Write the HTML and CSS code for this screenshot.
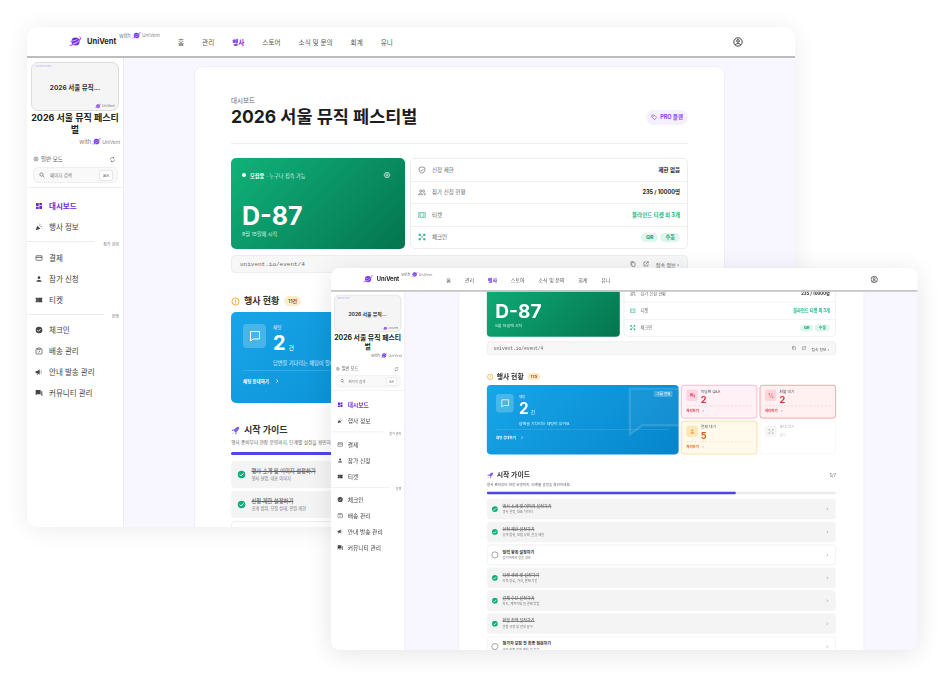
FILE: index.html
```html
<!DOCTYPE html>
<html lang="ko">
<head>
  <meta charset="UTF-8" />
  <meta name="viewport" content="width=device-width, initial-scale=1.0" />
  <title>UniVent 대시보드</title>
  <link rel="stylesheet" href="styles.css">
</head>
<body>
  <svg class="sprite" aria-hidden="true">
    <defs>
      <linearGradient id="planet" x1="0" y1="1" x2="1" y2="0">
        <stop offset="0" stop-color="#8b3dff"/>
        <stop offset="1" stop-color="#3f2bd6"/>
      </linearGradient>
    </defs>
    <symbol id="i-logo" viewBox="0 0 24 24">
      <circle cx="12" cy="12" r="7.5" fill="url(#planet)"/>
      <path d="M2 19C6 20 21 10 22 5" fill="none" stroke="#c04bf2" stroke-width="2" stroke-linecap="round"/>
      <path d="M6 11c3 0 8-2 10-4M8 16c3 0 7-2 10-5" fill="none" stroke="#fff" stroke-width="1.2"/>
      <circle cx="20" cy="3.5" r="1.4" fill="#e879f9"/>
      <circle cx="3" cy="12" r="1" fill="#a78bfa"/>
    </symbol>
    <symbol id="i-user" viewBox="0 0 24 24">
      <circle cx="12" cy="12" r="10" fill="none" stroke="currentColor" stroke-width="2"/>
      <circle cx="12" cy="9.5" r="3.2" fill="none" stroke="currentColor" stroke-width="2"/>
      <path d="M5.5 18.5c2-3.5 11-3.5 13 0" fill="none" stroke="currentColor" stroke-width="2"/>
    </symbol>
    <symbol id="i-gear" viewBox="0 0 24 24">
      <circle cx="12" cy="12" r="3.2" fill="none" stroke="currentColor" stroke-width="2"/>
      <path d="M12 3l2 2.6 3.3-.4.4 3.3L20.500 10.500 19 12l1.500 1.500-2.800 2 -.4 3.300-3.300-.4L12 21l-2-2.600-3.300.4-.4-3.300L3.500 13.500 5 12 3.500 10.500l2.800-2 .4-3.300 3.300.4z" fill="none" stroke="currentColor" stroke-width="2" stroke-linejoin="round"/>
    </symbol>
    <symbol id="i-refresh" viewBox="0 0 24 24">
      <path d="M5 12a7 7 0 0 1 11.500-5.400M19 12a7 7 0 0 1-11.500 5.400" fill="none" stroke="currentColor" stroke-width="2"/>
      <path d="M17.500 2.500v5h-5M6.500 21.500v-5h5" fill="currentColor"/>
    </symbol>
    <symbol id="i-search" viewBox="0 0 24 24">
      <circle cx="10" cy="10" r="6.500" fill="none" stroke="currentColor" stroke-width="2.400"/>
      <path d="M15 15l6 6" stroke="currentColor" stroke-width="2.400"/>
    </symbol>
    <symbol id="i-dash" viewBox="0 0 24 24">
      <path d="M3 3h8v10H3zM13 3h8v6h-8zM13 11h8v10h-8zM3 15h8v6H3z" fill="currentColor"/>
    </symbol>
    <symbol id="i-party" viewBox="0 0 24 24">
      <path d="M2 22l5-14 9 9z" fill="currentColor"/>
      <path d="M13 8l3-4M16 11l5-2M12 4V2M20 15l2 1" stroke="currentColor" stroke-width="1.600" fill="none"/>
    </symbol>
    <symbol id="i-card" viewBox="0 0 24 24">
      <rect x="3" y="5" width="18" height="14" rx="2" fill="none" stroke="currentColor" stroke-width="2"/>
      <path d="M3 10h18" stroke="currentColor" stroke-width="2.500"/>
    </symbol>
    <symbol id="i-person" viewBox="0 0 24 24">
      <circle cx="12" cy="8" r="4" fill="currentColor"/>
      <path d="M4 20c0-7 16-7 16 0z" fill="currentColor"/>
    </symbol>
    <symbol id="i-ticket" viewBox="0 0 24 24">
      <path d="M2 5h20v5a2 2 0 0 0 0 4v5H2v-5a2 2 0 0 0 0-4z" fill="currentColor"/>
      <path d="M9 5v14" stroke="#fff" stroke-width="1.400" stroke-dasharray="2 1.500"/>
    </symbol>
    <symbol id="i-check-fill" viewBox="0 0 24 24">
      <circle cx="12" cy="12" r="10" fill="currentColor"/>
      <path d="M7 12.500l3.500 3.500L17 9" fill="none" stroke="#fff" stroke-width="2.600"/>
    </symbol>
    <symbol id="i-box" viewBox="0 0 24 24">
      <path d="M9 5H5a2 2 0 0 0-2 2v12a2 2 0 0 0 2 2h14a2 2 0 0 0 2-2V7a2 2 0 0 0-2-2h-2" fill="none" stroke="currentColor" stroke-width="2"/>
      <path d="M8 3h8v5H8zM9 14l2 2 4-4" fill="none" stroke="currentColor" stroke-width="2"/>
    </symbol>
    <symbol id="i-mega" viewBox="0 0 24 24">
      <path d="M2 9h5l7-5v16l-7-5H2zM5 15l1 6h2l-1-6z" fill="currentColor"/>
      <path d="M17 8l3-2M17 12h4M17 16l3 2" stroke="currentColor" stroke-width="1.600"/>
    </symbol>
    <symbol id="i-forum" viewBox="0 0 24 24">
      <path d="M2 3h15v12H7l-5 4z" fill="currentColor"/>
      <path d="M19 7h3v15l-4-4H7v-1h12z" fill="currentColor"/>
    </symbol>
    <symbol id="i-tag" viewBox="0 0 24 24">
      <path d="M3 4h9l9 9-8 8-10-10z" fill="none" stroke="currentColor" stroke-width="2.400" stroke-linejoin="round"/>
      <circle cx="8" cy="9" r="1.600" fill="currentColor"/>
    </symbol>
    <symbol id="i-shield" viewBox="0 0 24 24">
      <path d="M12 2.500l8.500 3v6c0 5-3.500 8.500-8.500 10-5-1.500-8.500-5-8.500-10v-6z" fill="none" stroke="currentColor" stroke-width="2"/>
      <path d="M8 12l3 3 5-5.500" fill="none" stroke="currentColor" stroke-width="2"/>
    </symbol>
    <symbol id="i-people" viewBox="0 0 24 24">
      <circle cx="8" cy="9" r="3.200" fill="none" stroke="currentColor" stroke-width="1.800"/>
      <circle cx="16.500" cy="9" r="3.200" fill="none" stroke="currentColor" stroke-width="1.800"/>
      <path d="M1.500 20c0-6 12-6 12 0zM16 14.500c4 0 6.500 2 6.500 5.500H17" fill="none" stroke="currentColor" stroke-width="1.800"/>
    </symbol>
    <symbol id="i-ticket-line" viewBox="0 0 24 24">
      <path d="M2 5h20v5a2 2 0 0 0 0 4v5H2v-5a2 2 0 0 0 0-4z" fill="none" stroke="currentColor" stroke-width="2"/>
      <path d="M8 6v12M16 6v12" stroke="currentColor" stroke-width="1.600"/>
    </symbol>
    <symbol id="i-scan" viewBox="0 0 24 24">
      <path d="M5 5l14 14M19 5L5 19" stroke="currentColor" stroke-width="1.500"/>
      <path d="M2 2h6v6H2zM16 2h6v6h-6zM2 16h6v6H2zM16 16h6v6h-6z" fill="currentColor"/>
    </symbol>
    <symbol id="i-copy" viewBox="0 0 24 24">
      <rect x="7" y="6" width="13" height="16" rx="2" fill="none" stroke="currentColor" stroke-width="2.400"/>
      <path d="M4 17V3a1 1 0 0 1 1-1h10" fill="none" stroke="currentColor" stroke-width="2.400"/>
    </symbol>
    <symbol id="i-open" viewBox="0 0 24 24">
      <path d="M11 4H4v16h16v-7" fill="none" stroke="currentColor" stroke-width="2.400"/>
      <path d="M10 14L21 3M14 3h7v7" fill="none" stroke="currentColor" stroke-width="2.400"/>
    </symbol>
    <symbol id="i-info" viewBox="0 0 24 24">
      <circle cx="12" cy="12" r="9.500" fill="none" stroke="currentColor" stroke-width="2.400"/>
      <path d="M12 7v6.500M12 15.500v2" stroke="currentColor" stroke-width="2.400"/>
    </symbol>
    <symbol id="i-chat" viewBox="0 0 24 24">
      <path d="M3 3h18v15H8l-5 4z" fill="none" stroke="currentColor" stroke-width="2"/>
    </symbol>
    <symbol id="i-bubble" viewBox="0 0 80 64">
      <path d="M2 2h90v48H18L2 62z" fill="rgba(255,255,255,0.05)" stroke="rgba(255,255,255,0.14)" stroke-width="3"/>
    </symbol>
    <symbol id="i-rocket" viewBox="0 0 24 24">
      <path d="M22 2c-7 0-12 4-15 10l5 5c6-3 10-8 10-15z" fill="currentColor"/>
      <path d="M7 9l-5 2 3 2zM15 17l-2 5-2-3zM3 21l4-4" fill="currentColor" stroke="currentColor"/>
    </symbol>
    <symbol id="i-chevron" viewBox="0 0 24 24">
      <path d="M9 5l7 7-7 7" fill="none" stroke="currentColor" stroke-width="3"/>
    </symbol>
    <symbol id="i-qa" viewBox="0 0 24 24">
      <path d="M2 3h14v11H6l-4 4zM18 8h4v13l-4-3H9v-2h9z" fill="currentColor"/>
    </symbol>
    <symbol id="i-refund" viewBox="0 0 24 24">
      <path d="M5 3v9M2 6l3-3 3 3M19 21v-9M16 18l3 3 3-3" fill="none" stroke="currentColor" stroke-width="2"/>
      <path d="M7 21L17 3" stroke="currentColor" stroke-width="2"/>
    </symbol>
  </svg>

  <section class="window window-back">
    <header class="nav">
      <div class="brand">
        <svg class="brand-logo"><use href="#i-logo"/></svg>
        <span class="brand-name">UniVent</span>
        <span class="with with-nav">with <svg><use href="#i-logo"/></svg> <small>UniVent</small></span>
      </div>
      <nav class="nav-links">
        <a>홈</a><a>관리</a><a class="active">행사</a><a>스토어</a><a>소식 및 문의</a><a>회계</a><a>유니</a>
      </nav>
      <svg class="nav-user"><use href="#i-user"/></svg>
    </header>
    <div class="layout">
      <aside class="sidebar">
        <div class="thumb">
          <span class="thumb-tag">UniVent Event</span>
          <span class="thumb-title">2026 서울 뮤직...</span>
          <span class="thumb-mark"><svg><use href="#i-logo"/></svg> UniVent</span>
        </div>
        <h3 class="event-name">2026 서울 뮤직 페스티벌</h3>
        <div class="with with-side">with <svg><use href="#i-logo"/></svg> <small>UniVent</small></div>
        <div class="mode">
          <span class="mode-label"><svg><use href="#i-gear"/></svg> 일반 모드</span>
          <svg class="mode-refresh"><use href="#i-refresh"/></svg>
        </div>
        <div class="search">
          <svg><use href="#i-search"/></svg>
          <span>페이지 검색</span>
          <kbd>⌘K</kbd>
        </div>
        <ul class="menu menu-top">
          <li class="active"><svg><use href="#i-dash"/></svg>대시보드</li>
          <li><svg><use href="#i-party"/></svg>행사 정보</li>
        </ul>
        <div class="menu-group group-wide"><i></i><span>참가 관리</span></div>
        <ul class="menu">
          <li><svg><use href="#i-card"/></svg>결제</li>
          <li><svg><use href="#i-person"/></svg>참가 신청</li>
          <li><svg><use href="#i-ticket"/></svg>티켓</li>
        </ul>
        <div class="menu-group"><i></i><span>운영</span></div>
        <ul class="menu">
          <li><svg><use href="#i-check-fill"/></svg>체크인</li>
          <li><svg><use href="#i-box"/></svg>배송 관리</li>
          <li><svg><use href="#i-mega"/></svg>안내 발송 관리</li>
          <li><svg><use href="#i-forum"/></svg>커뮤니티 관리</li>
        </ul>
      </aside>
      <main class="main">
        <div class="card">
          <p class="crumb">대시보드</p>
          <div class="title-row">
            <h1>2026 서울 뮤직 페스티벌</h1>
            <span class="plan"><svg><use href="#i-tag"/></svg>PRO 플랜</span>
          </div>
          <div class="overview">
            <div class="hero">
              <div class="hero-top">
                <span class="hero-status"><i></i><b>모집중</b> · 누구나 접속 가능</span>
                <svg><use href="#i-gear"/></svg>
              </div>
              <div class="hero-dday">D-87</div>
              <div class="hero-date">8월 15일에 시작</div>
            </div>
            <div class="info">
              <div class="info-row"><svg><use href="#i-shield"/></svg><span>신청 제한</span><b>제한 없음</b></div>
              <div class="info-row"><svg><use href="#i-people"/></svg><span>참가 신청 현황</span><b>235 / 10000명</b></div>
              <div class="info-row row-green"><svg><use href="#i-ticket-line"/></svg><span>티켓</span><b>블라인드 티켓 외 3개</b></div>
              <div class="info-row row-green"><svg><use href="#i-scan"/></svg><span>체크인</span><em>QR</em><em>수동</em></div>
            </div>
          </div>
          <div class="url-bar">
            <code>univent.io/event/4</code>
            <svg><use href="#i-copy"/></svg>
            <svg><use href="#i-open"/></svg>
            <span>접속 정보 ›</span>
          </div>
          <h2 class="section-title status-title"><svg><use href="#i-info"/></svg>행사 현황<span class="count">11건</span></h2>
          <div class="status-grid">
            <div class="chat-card">
              <svg class="chat-deco"><use href="#i-bubble"/></svg>
              <span class="chat-scope">그룹 전체</span>
              <div class="chat-main">
                <div class="chat-tile"><svg><use href="#i-chat"/></svg></div>
                <div>
                  <div class="chat-label">채팅</div>
                  <div class="chat-num">2<small>건</small></div>
                  <div class="chat-desc">답변을 기다리는 채팅이 있어요</div>
                </div>
              </div>
              <div class="chat-link">채팅 응대하기 <svg><use href="#i-chevron"/></svg></div>
            </div>
            <div class="todo todo-pink">
              <div class="todo-top"><span class="todo-icon"><svg><use href="#i-qa"/></svg></span><div><p>미답변 Q&amp;A</p><b>2</b></div></div>
              <div class="todo-link">처리하기 <svg><use href="#i-chevron"/></svg></div>
            </div>
            <div class="todo todo-red">
              <div class="todo-top"><span class="todo-icon"><svg><use href="#i-refund"/></svg></span><div><p>환불 대기</p><b>2</b></div></div>
              <div class="todo-link">처리하기 <svg><use href="#i-chevron"/></svg></div>
            </div>
            <div class="todo todo-yellow">
              <div class="todo-top"><span class="todo-icon"><svg><use href="#i-person"/></svg></span><div><p>결제 대기</p><b>5</b></div></div>
              <div class="todo-link">처리하기 <svg><use href="#i-chevron"/></svg></div>
            </div>
            <div class="todo todo-empty">
              <div class="todo-top"><span class="todo-icon"><svg><use href="#i-scan"/></svg></span><div><p>초대 대기</p><small>없음</small></div></div>
            </div>
          </div>
          <div class="guide-head">
            <div>
              <h2 class="section-title"><svg class="rocket"><use href="#i-rocket"/></svg>시작 가이드</h2>
              <p>행사 준비부터 현장 운영까지, 단계별 설정을 확인하세요.</p>
            </div>
            <span>5/7</span>
          </div>
          <div class="progress"><i></i></div>
          <ul class="guide">
            <li class="done"><svg class="state"><use href="#i-check-fill"/></svg><div><b>행사 소개 및 이미지 설정하기</b><span>행사 설명, 대표 이미지</span></div><svg class="arrow"><use href="#i-chevron"/></svg></li>
            <li class="done"><svg class="state"><use href="#i-check-fill"/></svg><div><b>신청 제한 설정하기</b><span>공개 범위, 모집 상태, 인원 제한</span></div><svg class="arrow"><use href="#i-chevron"/></svg></li>
            <li><i class="state"></i><div><b>입력 항목 설정하기</b><span>참가자에게 받을 정보</span></div><svg class="arrow"><use href="#i-chevron"/></svg></li>
          </ul>
        </div>
      </main>
    </div>
  </section>

  <section class="window window-front">
    <header class="nav">
      <div class="brand">
        <svg class="brand-logo"><use href="#i-logo"/></svg>
        <span class="brand-name">UniVent</span>
        <span class="with with-nav">with <svg><use href="#i-logo"/></svg> <small>UniVent</small></span>
      </div>
      <nav class="nav-links">
        <a>홈</a><a>관리</a><a class="active">행사</a><a>스토어</a><a>소식 및 문의</a><a>회계</a><a>유니</a>
      </nav>
      <svg class="nav-user"><use href="#i-user"/></svg>
    </header>
    <div class="layout">
      <aside class="sidebar">
        <div class="thumb">
          <span class="thumb-tag">UniVent Event</span>
          <span class="thumb-title">2026 서울 뮤직...</span>
          <span class="thumb-mark"><svg><use href="#i-logo"/></svg> UniVent</span>
        </div>
        <h3 class="event-name">2026 서울 뮤직 페스티벌</h3>
        <div class="with with-side">with <svg><use href="#i-logo"/></svg> <small>UniVent</small></div>
        <div class="mode">
          <span class="mode-label"><svg><use href="#i-gear"/></svg> 일반 모드</span>
          <svg class="mode-refresh"><use href="#i-refresh"/></svg>
        </div>
        <div class="search">
          <svg><use href="#i-search"/></svg>
          <span>페이지 검색</span>
          <kbd>⌘K</kbd>
        </div>
        <ul class="menu menu-top">
          <li class="active"><svg><use href="#i-dash"/></svg>대시보드</li>
          <li><svg><use href="#i-party"/></svg>행사 정보</li>
        </ul>
        <div class="menu-group group-wide"><i></i><span>참가 관리</span></div>
        <ul class="menu">
          <li><svg><use href="#i-card"/></svg>결제</li>
          <li><svg><use href="#i-person"/></svg>참가 신청</li>
          <li><svg><use href="#i-ticket"/></svg>티켓</li>
        </ul>
        <div class="menu-group"><i></i><span>운영</span></div>
        <ul class="menu">
          <li><svg><use href="#i-check-fill"/></svg>체크인</li>
          <li><svg><use href="#i-box"/></svg>배송 관리</li>
          <li><svg><use href="#i-mega"/></svg>안내 발송 관리</li>
          <li><svg><use href="#i-forum"/></svg>커뮤니티 관리</li>
        </ul>
      </aside>
      <main class="main">
        <div class="card">
          <p class="crumb">대시보드</p>
          <div class="title-row">
            <h1>2026 서울 뮤직 페스티벌</h1>
            <span class="plan"><svg><use href="#i-tag"/></svg>PRO 플랜</span>
          </div>
          <div class="overview">
            <div class="hero">
              <div class="hero-top">
                <span class="hero-status"><i></i><b>모집중</b> · 누구나 접속 가능</span>
                <svg><use href="#i-gear"/></svg>
              </div>
              <div class="hero-dday">D-87</div>
              <div class="hero-date">8월 15일에 시작</div>
            </div>
            <div class="info">
              <div class="info-row"><svg><use href="#i-shield"/></svg><span>신청 제한</span><b>제한 없음</b></div>
              <div class="info-row"><svg><use href="#i-people"/></svg><span>참가 신청 현황</span><b>235 / 10000명</b></div>
              <div class="info-row row-green"><svg><use href="#i-ticket-line"/></svg><span>티켓</span><b>블라인드 티켓 외 3개</b></div>
              <div class="info-row row-green"><svg><use href="#i-scan"/></svg><span>체크인</span><em>QR</em><em>수동</em></div>
            </div>
          </div>
          <div class="url-bar">
            <code>univent.io/event/4</code>
            <svg><use href="#i-copy"/></svg>
            <svg><use href="#i-open"/></svg>
            <span>접속 정보 ›</span>
          </div>
          <h2 class="section-title status-title"><svg><use href="#i-info"/></svg>행사 현황<span class="count">11건</span></h2>
          <div class="status-grid">
            <div class="chat-card">
              <svg class="chat-deco"><use href="#i-bubble"/></svg>
              <span class="chat-scope">그룹 전체</span>
              <div class="chat-main">
                <div class="chat-tile"><svg><use href="#i-chat"/></svg></div>
                <div>
                  <div class="chat-label">채팅</div>
                  <div class="chat-num">2<small>건</small></div>
                  <div class="chat-desc">답변을 기다리는 채팅이 있어요</div>
                </div>
              </div>
              <div class="chat-link">채팅 응대하기 <svg><use href="#i-chevron"/></svg></div>
            </div>
            <div class="todo todo-pink">
              <div class="todo-top"><span class="todo-icon"><svg><use href="#i-qa"/></svg></span><div><p>미답변 Q&amp;A</p><b>2</b></div></div>
              <div class="todo-link">처리하기 <svg><use href="#i-chevron"/></svg></div>
            </div>
            <div class="todo todo-red">
              <div class="todo-top"><span class="todo-icon"><svg><use href="#i-refund"/></svg></span><div><p>환불 대기</p><b>2</b></div></div>
              <div class="todo-link">처리하기 <svg><use href="#i-chevron"/></svg></div>
            </div>
            <div class="todo todo-yellow">
              <div class="todo-top"><span class="todo-icon"><svg><use href="#i-person"/></svg></span><div><p>결제 대기</p><b>5</b></div></div>
              <div class="todo-link">처리하기 <svg><use href="#i-chevron"/></svg></div>
            </div>
            <div class="todo todo-empty">
              <div class="todo-top"><span class="todo-icon"><svg><use href="#i-scan"/></svg></span><div><p>초대 대기</p><small>없음</small></div></div>
            </div>
          </div>
          <div class="guide-head">
            <div>
              <h2 class="section-title"><svg class="rocket"><use href="#i-rocket"/></svg>시작 가이드</h2>
              <p>행사 준비부터 현장 운영까지, 단계별 설정을 확인하세요.</p>
            </div>
            <span>5/7</span>
          </div>
          <div class="progress"><i></i></div>
          <ul class="guide">
            <li class="done"><svg class="state"><use href="#i-check-fill"/></svg><div><b>행사 소개 및 이미지 설정하기</b><span>행사 설명, 대표 이미지</span></div><svg class="arrow"><use href="#i-chevron"/></svg></li>
            <li class="done"><svg class="state"><use href="#i-check-fill"/></svg><div><b>신청 제한 설정하기</b><span>공개 범위, 모집 상태, 인원 제한</span></div><svg class="arrow"><use href="#i-chevron"/></svg></li>
            <li><i class="state"></i><div><b>입력 항목 설정하기</b><span>참가자에게 받을 정보</span></div><svg class="arrow"><use href="#i-chevron"/></svg></li>
            <li class="done"><svg class="state"><use href="#i-check-fill"/></svg><div><b>티켓 생성 및 설정하기</b><span>티켓 종류, 가격, 판매 기간</span></div><svg class="arrow"><use href="#i-chevron"/></svg></li>
            <li class="done"><svg class="state"><use href="#i-check-fill"/></svg><div><b>결제 수단 설정하기</b><span>카드, 계좌이체 등 결제 방법</span></div><svg class="arrow"><use href="#i-chevron"/></svg></li>
            <li class="done"><svg class="state"><use href="#i-check-fill"/></svg><div><b>환불 정책 설정하기</b><span>환불 규정 및 안내 문구</span></div><svg class="arrow"><use href="#i-chevron"/></svg></li>
            <li><i class="state"></i><div><b>참가자 모집 전 최종 점검하기</b><span>설정 항목 전체 확인 및 점검</span></div><svg class="arrow"><use href="#i-chevron"/></svg></li>
          </ul>
        </div>
      </main>
    </div>
  </section>
</body>
</html>
```

FILE: styles.css
```css
* {
  box-sizing: border-box;
  margin: 0;
  padding: 0;
}
html, body {
  height: 100%;
}
body {
  position: relative;
  overflow: hidden;
  background: #fff;
  font-family: Inter, "Noto Sans CJK KR", sans-serif;
  color: #222;
}
ul {
  list-style: none;
}
.sprite {
  position: absolute;
  width: 0;
  height: 0;
}

/* two copies of the same page, the front one shrunk and scrolled */
.window {
  position: absolute;
  width: 768px;
  height: 500px;
  display: flex;
  flex-direction: column;
  border-radius: 11px;
  overflow: hidden;
  background: #f8f6fe;
  transform-origin: top left;
}
.window-back {
  left: 27px;
  top: 27px;
  box-shadow: 0 2px 24px rgba(0, 0, 0, 0.08);
}
.window-front {
  left: 331px;
  top: 268px;
  transform: scale(0.764);
  box-shadow: 0 4px 30px rgba(0, 0, 0, 0.1);
}
.window-front .card {
  margin-top: -132px;
}

.nav {
  flex: none;
  height: 31px;
  display: flex;
  align-items: center;
  padding: 0 0 0 42px;
  background: #fff;
  border-bottom: 2px solid #bdbdbd;
  position: relative;
  z-index: 2;
}
.brand {
  width: 109px;
  display: flex;
  align-items: center;
  flex: none;
  white-space: nowrap;
}
.brand-logo {
  flex: none;
  width: 13px;
  height: 13px;
}
.brand-name {
  flex: none;
  margin-left: 5px;
  width: 32px;
  font-size: 7.500px;
  font-weight: 700;
  color: #222;
}
.with {
  display: flex;
  align-items: center;
  gap: 1px;
  color: #888;
  font-size: 6px;
  white-space: nowrap;
}
.with small {
  font-size: 4.800px;
}
.with svg {
  width: 9px;
  height: 9px;
}
.with-nav {
  margin-bottom: 13px;
}
.nav-links {
  display: flex;
  gap: 18px;
  font-size: 6.600px;
  color: #555;
  white-space: nowrap;
}
.nav-links .active {
  color: #6d28d9;
  font-weight: 700;
}
.nav-user {
  width: 10px;
  height: 10px;
  color: #222;
  margin-left: auto;
  margin-right: 52px;
}

.layout {
  flex: 1;
  display: flex;
  min-height: 0;
}
.sidebar {
  flex: none;
  width: 97px;
  background: #fff;
  border-right: 1px solid #ececf2;
}
.thumb {
  margin: 4px 4px 0;
  width: 88px;
  height: 49px;
  border: 1px solid #ddd;
  border-radius: 7px;
  background: #f5f5f5;
  display: flex;
  align-items: center;
  justify-content: center;
  position: relative;
}
.thumb-tag {
  position: absolute;
  left: 3px;
  top: 2px;
  font-size: 2.500px;
  color: #b9a8f5;
}
.thumb-title {
  font-size: 6.500px;
  font-weight: 700;
  color: #333;
}
.thumb-mark {
  position: absolute;
  right: 3px;
  bottom: 1px;
  display: flex;
  align-items: center;
  gap: 1px;
  font-size: 3.500px;
  color: #777;
}
.thumb-mark svg {
  width: 6px;
  height: 6px;
}
.event-name {
  margin: 1px 3px 0;
  font-size: 9px;
  line-height: 11.500px;
  font-weight: 700;
  text-align: center;
  color: #222;
}
.with-side {
  justify-content: flex-end;
  padding-right: 3px;
  margin-top: 2px;
}
.mode {
  display: flex;
  align-items: center;
  justify-content: space-between;
  margin-top: 9px;
  padding: 0 7px 0 6px;
}
.mode-label {
  display: flex;
  align-items: center;
  gap: 2px;
  font-size: 5.500px;
  color: #555;
}
.mode-label svg {
  width: 6px;
  height: 6px;
}
.mode-refresh {
  width: 7px;
  height: 7px;
  color: #555;
}
.search {
  margin: 4px 5px 0 6px;
  height: 16px;
  display: flex;
  align-items: center;
  gap: 5px;
  padding: 0 4px 0 5px;
  background: #f9f9f9;
  border: 1px solid #efefef;
  border-radius: 5px;
  font-size: 4.500px;
  color: #777;
}
.search svg {
  width: 6px;
  height: 6px;
  color: #555;
}
.search kbd {
  margin-left: auto;
  padding: 2px 2.500px;
  background: #fff;
  border: 1px solid #e6e6e6;
  border-radius: 2px;
  font-family: inherit;
  font-size: 4px;
  line-height: 5px;
  color: #777;
}
.menu-top {
  border-top: 1px solid #efefef;
  margin-top: 4px;
  padding-top: 7px;
}
.menu li {
  height: 21px;
  display: flex;
  align-items: center;
  gap: 6px;
  padding-left: 8px;
  font-size: 7.500px;
  color: #444;
}
.menu li svg {
  width: 8px;
  height: 8px;
  color: #444;
}
.menu li.active {
  color: #6d28d9;
  font-weight: 700;
}
.menu li.active svg {
  color: #6d28d9;
}
.menu-group {
  height: 10px;
  margin-top: -1px;
  display: flex;
  align-items: center;
  gap: 8px;
  padding-right: 4px;
}
.group-wide {
  height: 11px;
}
.menu-group i {
  flex: 1;
  height: 1px;
  background: #ececec;
}
.menu-group span {
  margin-top: 4px;
  font-size: 4px;
  color: #777;
}

.main {
  flex: 1;
  min-width: 0;
  padding: 8px 70px 0;
}
.card {
  background: #fff;
  border: 1px solid #f0eef6;
  border-radius: 9px;
  padding: 30px 36px 0;
  height: 1000px;
}
.crumb {
  font-size: 6.500px;
  line-height: 9px;
  color: #666;
}
.title-row {
  margin-top: 1px;
  padding-bottom: 16px;
  display: flex;
  align-items: center;
  justify-content: space-between;
  border-bottom: 1px solid #efefef;
}
.title-row h1 {
  font-size: 17.500px;
  line-height: 20px;
  font-weight: 700;
  color: #1c1c1c;
}
.plan {
  display: flex;
  align-items: center;
  gap: 3px;
  height: 15px;
  padding: 0 5px;
  background: #f4f0fe;
  border-radius: 8px;
  font-size: 5.500px;
  font-weight: 700;
  color: #8b3dff;
}
.plan svg {
  width: 6.500px;
  height: 6.500px;
}
.overview {
  margin-top: 14px;
  display: flex;
  gap: 5px;
}
.hero {
  flex: none;
  width: 174px;
  height: 91px;
  padding: 12px 11px 0;
  border-radius: 5px;
  color: #fff;
  background: linear-gradient(135deg, #10b27a, #04744f);
}
.hero-top {
  display: flex;
  align-items: center;
  justify-content: space-between;
  height: 10px;
  padding-right: 3px;
}
.hero-top svg {
  width: 8px;
  height: 8px;
}
.hero-status {
  display: flex;
  align-items: center;
  gap: 2px;
  font-size: 5.200px;
  color: #d6f3e7;
}
.hero-status i {
  width: 4px;
  height: 4px;
  margin-right: 2px;
  border-radius: 50%;
  background: #fff;
}
.hero-status b {
  color: #fff;
}
.hero-dday {
  margin-top: 22px;
  font-size: 25px;
  line-height: 28px;
  font-weight: 700;
}
.hero-date {
  font-size: 5.200px;
  line-height: 8px;
  color: #d6f3e7;
}
.info {
  flex: 1;
  height: 91px;
  display: flex;
  flex-direction: column;
  border: 1px solid #ececec;
  border-radius: 5px;
}
.info-row {
  flex: 1;
  display: flex;
  align-items: center;
  padding: 0 7px;
  border-top: 1px solid #f0f0f0;
  font-size: 5.500px;
  color: #666;
}
.info-row:first-child {
  border-top: 0;
}
.info-row svg {
  width: 8px;
  height: 8px;
  margin-right: 6px;
  color: #666;
}
.info-row b {
  margin-left: auto;
  font-weight: 700;
  color: #222;
}
.row-green svg, .row-green b {
  color: #1fb383;
}
.info-row em {
  height: 9px;
  padding: 1px 5px;
  margin-left: 2px;
  border-radius: 5px;
  background: #dff6ee;
  color: #15a275;
  font-style: normal;
  font-weight: 700;
  font-size: 5.200px;
  line-height: 7px;
}
.info-row em:first-of-type {
  margin-left: auto;
}
.url-bar {
  margin-top: 6px;
  height: 18px;
  display: flex;
  align-items: center;
  gap: 7px;
  padding: 0 8px;
  background: #f7f7f7;
  border: 1px solid #ededed;
  border-radius: 4px;
  font-size: 5px;
  color: #555;
}
.url-bar code {
  margin-right: auto;
  font-family: "Liberation Mono", monospace;
  font-size: 6px;
  color: #666;
}
.url-bar svg {
  width: 6px;
  height: 6px;
  color: #666;
}

.section-title {
  display: flex;
  align-items: center;
  gap: 4px;
  font-size: 9px;
  line-height: 14px;
  font-weight: 700;
  color: #333;
}
.section-title svg {
  width: 9px;
  height: 9px;
}
.status-title {
  margin-top: 21px;
}
.status-title svg {
  color: #f0a030;
}
.count {
  margin-left: 1px;
  padding: 0 4px;
  height: 10px;
  background: #fdeccb;
  border-radius: 5px;
  font-size: 5px;
  line-height: 10px;
  color: #c2410c;
}
.status-grid {
  margin-top: 4px;
  display: grid;
  grid-template-columns: 251px 100px 100px;
  grid-template-rows: 44px 44px;
  gap: 3px;
}
.chat-card {
  grid-row: span 2;
  position: relative;
  overflow: hidden;
  padding: 12px 12px 0;
  border-radius: 5px;
  color: #fff;
  background: linear-gradient(135deg, #18a6e8, #0585cb);
}
.chat-deco {
  position: absolute;
  right: -14px;
  top: 3px;
  width: 80px;
  height: 64px;
}
.chat-scope {
  position: absolute;
  right: 8px;
  top: 8px;
  padding: 1px 3px;
  background: rgba(255, 255, 255, 0.22);
  border-radius: 1px;
  font-size: 4.500px;
  line-height: 6px;
}
.chat-main {
  display: flex;
  gap: 7px;
  position: relative;
}
.chat-tile {
  width: 23px;
  height: 24px;
  display: flex;
  align-items: center;
  justify-content: center;
  border-radius: 4px;
  background: rgba(255, 255, 255, 0.22);
}
.chat-tile svg {
  width: 12px;
  height: 12px;
}
.chat-label {
  margin-top: 1px;
  font-size: 4.500px;
  line-height: 6px;
  color: #e2f4fd;
}
.chat-num {
  margin-top: 2px;
  font-size: 20px;
  line-height: 21px;
  font-weight: 700;
}
.chat-num small {
  margin-left: 3px;
  font-size: 6px;
  font-weight: 400;
}
.chat-desc {
  margin-top: 1px;
  font-size: 5.200px;
  line-height: 8px;
  white-space: nowrap;
  color: #e2f4fd;
}
.chat-link {
  position: absolute;
  left: 12px;
  right: 12px;
  top: 58px;
  padding-top: 7px;
  display: flex;
  align-items: center;
  gap: 3px;
  border-top: 1px solid rgba(255, 255, 255, 0.15);
  font-size: 4.500px;
  font-weight: 700;
}
.chat-link svg {
  width: 6px;
  height: 6px;
  margin-left: 2px;
}
.todo {
  padding: 4px 6px 0;
  border: 1px solid #eee;
  border-radius: 4px;
}
.todo-top {
  height: 22px;
  display: flex;
  gap: 4px;
}
.todo-top p {
  font-size: 5px;
  line-height: 7px;
  color: #555;
  white-space: nowrap;
}
.todo-top b {
  display: block;
  font-size: 12px;
  line-height: 15px;
  font-weight: 700;
}
.todo-top small {
  display: block;
  margin-top: 3px;
  font-size: 4.500px;
  color: #ccc;
}
.todo-icon {
  width: 15px;
  height: 15px;
  margin-top: 1px;
  flex: none;
  display: flex;
  align-items: center;
  justify-content: center;
  border-radius: 3px;
}
.todo-icon svg {
  width: 8px;
  height: 8px;
}
.todo-link {
  padding-top: 3px;
  display: flex;
  align-items: center;
  gap: 2px;
  border-top: 1px dashed rgba(230, 100, 120, 0.25);
  font-size: 4.500px;
  line-height: 6px;
  font-weight: 700;
}
.todo-link svg {
  width: 4px;
  height: 4px;
  margin-left: 1px;
}
.todo-pink {
  background: #fff1f5;
  border-color: #f6a9c4;
}
.todo-pink .todo-icon {
  background: #fcd5e2;
  color: #ec6c98;
}
.todo-pink b, .todo-pink .todo-link, .todo-red b, .todo-red .todo-link {
  color: #d9303a;
}
.todo-red {
  background: #fff1f2;
  border-color: #f28b92;
}
.todo-red .todo-icon {
  background: #fcd7da;
  color: #e2444e;
}
.todo-yellow {
  background: #fffaeb;
  border-color: #fbd68f;
}
.todo-yellow .todo-icon {
  background: #fde7b8;
  color: #e89a2c;
}
.todo-yellow b, .todo-yellow .todo-link {
  color: #d9601a;
}
.todo-yellow .todo-link {
  border-top-color: rgba(230, 170, 60, 0.3);
}
.todo-empty {
  background: #fff;
  border-color: #f3f3f3;
}
.todo-empty .todo-icon {
  background: #f5f5f5;
  color: #c4c4c4;
}
.todo-empty p {
  color: #b5b5b5;
}

.guide-head {
  margin-top: 20px;
  display: flex;
  align-items: flex-start;
  justify-content: space-between;
}
.guide-head p {
  margin-top: 1px;
  font-size: 4.700px;
  line-height: 8px;
  white-space: nowrap;
  color: #666;
}
.guide-head > span {
  margin-top: 4px;
  font-size: 5.500px;
  color: #555;
}
.rocket {
  color: #7c5cf5;
}
.progress {
  margin-top: 6px;
  height: 2.500px;
  background: #ececec;
  border-radius: 2px;
}
.progress i {
  display: block;
  width: 71.400%;
  height: 100%;
  background: #4f46e5;
  border-radius: 2px;
}
.guide {
  margin-top: 6px;
  display: flex;
  flex-direction: column;
  gap: 2.500px;
}
.guide li {
  height: 27.500px;
  display: flex;
  align-items: center;
  padding: 0 8px 0 5px;
  background: #fff;
  border: 1px solid #eee;
  border-radius: 4px;
}
.guide li.done {
  background: #f4f4f4;
  border-color: #f4f4f4;
}
.guide .state {
  flex: none;
  width: 9px;
  height: 9px;
  margin-right: 5.500px;
  color: #10ae78;
}
.guide i.state {
  border: 1px solid #888;
  border-radius: 50%;
}
.guide b {
  display: block;
  font-size: 5.300px;
  line-height: 8px;
  font-weight: 700;
  color: #333;
}
.guide .done b {
  font-weight: 500;
  color: #666;
  text-decoration: line-through;
}
.guide span {
  display: block;
  margin-top: 1px;
  font-size: 4.200px;
  line-height: 6.500px;
  color: #777;
}
.guide .arrow {
  flex: none;
  width: 5px;
  height: 5px;
  margin-left: auto;
  color: #777;
}
```
